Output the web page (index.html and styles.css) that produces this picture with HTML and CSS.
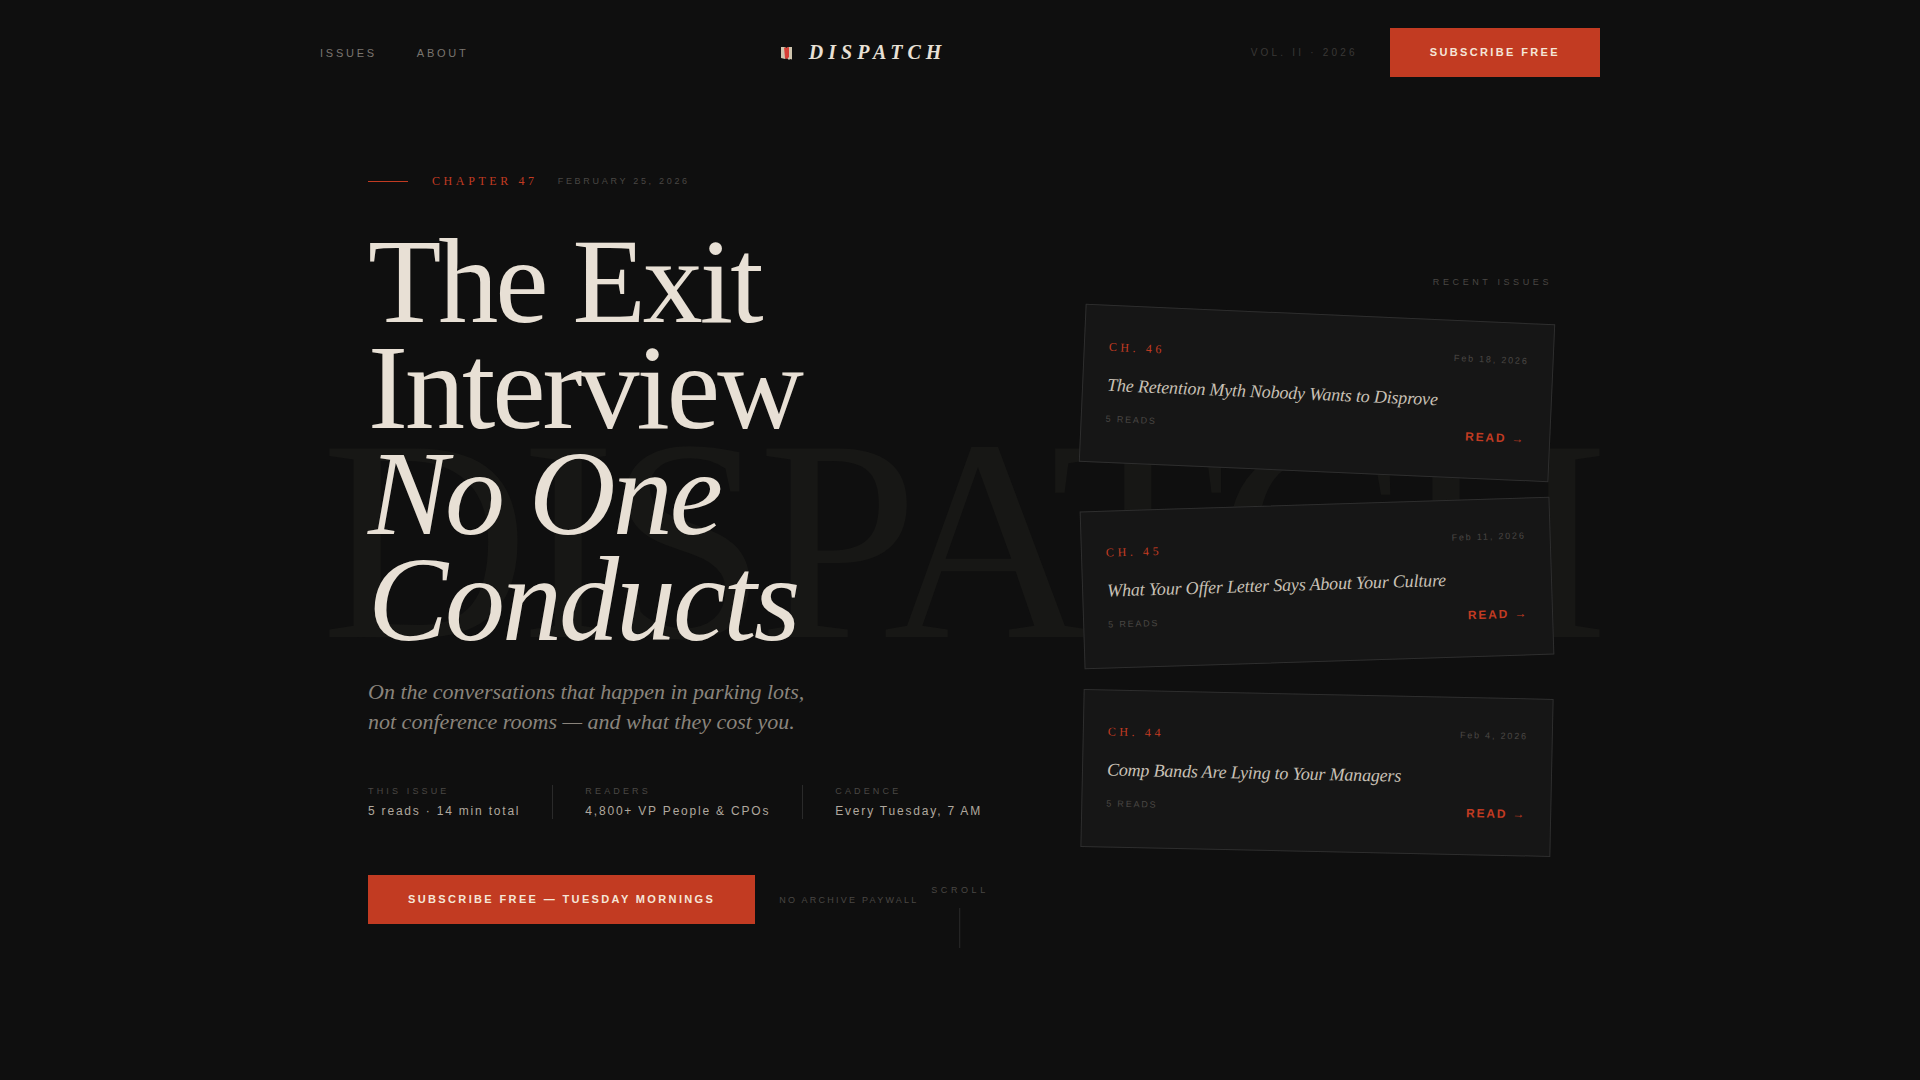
FILE: index.html
```html
<!DOCTYPE html>
<html lang="en">
<head>
  <meta charset="UTF-8">
  <meta name="viewport" content="width=device-width, initial-scale=1">
  <title>Dispatch</title>
  <link rel="stylesheet" href="styles.css">
</head>
<body>
  <div class="watermark" aria-hidden="true">DISPATCH</div>

  <header class="nav">
    <nav class="nav-links">
      <a href="#issues">ISSUES</a>
      <a href="#about">ABOUT</a>
    </nav>
    <a class="logo" href="#">
      <svg class="logo-mark" viewBox="0 0 24 24" aria-hidden="true">
        <path d="M8 6h4l1 1v10l-1 1-4-1z" fill="#cfc5ae"/>
        <path d="M19 6h-4l-1 1v10l2 2 1-1 2 .5z" fill="#cfc5ae"/>
        <path d="M11 6l1 1 4-1v10l-2 2-2-1z" fill="#d63f35"/>
      </svg>
      <span>DISPATCH</span>
    </a>
    <div class="nav-right">
      <span class="volume">VOL. II · 2026</span>
      <button class="btn">SUBSCRIBE FREE</button>
    </div>
  </header>

  <main class="hero">
    <section class="feature">
      <div class="eyebrow">
        <span class="rule"></span>
        <span class="chapter">CHAPTER 47</span>
        <span class="date">FEBRUARY 25, 2026</span>
      </div>
      <h1>The Exit<br>Interview<br><em>No One<br>Conducts</em></h1>
      <p class="deck">On the conversations that happen in parking lots,<br>not conference rooms — and what they cost you.</p>
      <dl class="stats">
        <div class="stat">
          <dt>THIS ISSUE</dt>
          <dd>5 reads · 14 min total</dd>
        </div>
        <div class="stat">
          <dt>READERS</dt>
          <dd>4,800+ VP People &amp; CPOs</dd>
        </div>
        <div class="stat">
          <dt>CADENCE</dt>
          <dd>Every Tuesday, 7 AM</dd>
        </div>
      </dl>
      <div class="actions">
        <button class="btn">SUBSCRIBE FREE — TUESDAY MORNINGS</button>
        <span class="note">NO ARCHIVE PAYWALL</span>
      </div>
    </section>

    <aside class="recent">
      <h2>RECENT ISSUES</h2>
      <div class="cards">
        <article class="card card-one">
          <div>
            <p class="card-chapter">CH. 46</p>
            <h3>The Retention Myth Nobody Wants to Disprove</h3>
            <p class="card-reads">5 READS</p>
          </div>
          <div class="card-side">
            <time class="card-date">Feb 18, 2026</time>
            <a class="read" href="#46">READ →</a>
          </div>
        </article>
        <article class="card card-two">
          <div>
            <p class="card-chapter">CH. 45</p>
            <h3>What Your Offer Letter Says About Your Culture</h3>
            <p class="card-reads">5 READS</p>
          </div>
          <div class="card-side">
            <time class="card-date">Feb 11, 2026</time>
            <a class="read" href="#45">READ →</a>
          </div>
        </article>
        <article class="card card-three">
          <div>
            <p class="card-chapter">CH. 44</p>
            <h3>Comp Bands Are Lying to Your Managers</h3>
            <p class="card-reads">5 READS</p>
          </div>
          <div class="card-side">
            <time class="card-date">Feb 4, 2026</time>
            <a class="read" href="#44">READ →</a>
          </div>
        </article>
      </div>
    </aside>

    <div class="scroll">
      <span>SCROLL</span>
      <span class="scroll-line"></span>
    </div>
  </main>
</body>
</html>
```
FILE: styles.css
```css
* {
  box-sizing: border-box;
  margin: 0;
  padding: 0;
}

body {
  position: relative;
  min-height: 100vh;
  overflow-x: hidden;
  background: #0f0f0f;
  color: #e8e0d5;
  font-family: "Liberation Sans", Arial, sans-serif;
}

a {
  color: inherit;
  text-decoration: none;
}

.watermark {
  position: absolute;
  top: 50%;
  left: 50%;
  transform: translate(-50%, -50%);
  font-family: "Liberation Serif", Georgia, serif;
  font-size: 288px;
  line-height: 288px;
  letter-spacing: -9px;
  color: #171715;
  white-space: nowrap;
  user-select: none;
}

/* Nav */

.nav {
  position: relative;
  display: flex;
  align-items: center;
  justify-content: space-between;
  max-width: 1280px;
  margin: 0 auto;
  padding: 28px 0;
}

.nav-links {
  display: flex;
  gap: 40px;
  font-size: 11px;
  letter-spacing: 0.25em;
  color: #7a756f;
}

.logo {
  display: flex;
  align-items: center;
  gap: 12px;
  font-family: "Liberation Serif", Georgia, serif;
  font-size: 20px;
  font-weight: bold;
  font-style: italic;
  letter-spacing: 0.25em;
}

.logo-mark {
  width: 24px;
  height: 24px;
}

.nav-right {
  display: flex;
  align-items: center;
  gap: 32px;
}

.volume {
  font-size: 10px;
  letter-spacing: 0.32em;
  color: #3a3836;
}

.btn {
  padding: 18px 40px;
  border: none;
  background: #c23b22;
  color: #f5e6d8;
  font-family: inherit;
  font-size: 11px;
  font-weight: bold;
  line-height: 13px;
  letter-spacing: 0.215em;
  white-space: nowrap;
  cursor: pointer;
}

/* Hero */

.hero {
  position: relative;
  display: grid;
  grid-template-columns: 1fr 470px;
  gap: 80px;
  align-items: center;
  max-width: 1280px;
  margin: 0 auto;
  padding: 68px 48px 24px;
}

.eyebrow {
  display: flex;
  align-items: center;
  margin-bottom: 40px;
}

.rule {
  width: 40px;
  height: 1px;
  margin-right: 24px;
  background: #c23b22;
}

.chapter {
  margin-right: 20px;
  font-family: "Liberation Serif", Georgia, serif;
  font-size: 12px;
  line-height: 16px;
  letter-spacing: 0.3em;
  color: #c23b22;
}

.date {
  font-size: 9px;
  letter-spacing: 0.3em;
  color: #4a4744;
}

h1 {
  margin-bottom: 24px;
  font-family: "Liberation Serif", Georgia, serif;
  font-size: 120px;
  font-weight: normal;
  line-height: 106px;
  letter-spacing: -3px;
}

.deck {
  margin-bottom: 48px;
  font-family: "Liberation Serif", Georgia, serif;
  font-size: 22px;
  font-style: italic;
  line-height: 30px;
  color: #8a847c;
}

.stats {
  display: flex;
  margin-bottom: 56px;
}

.stat + .stat {
  margin-left: 32px;
  padding-left: 32px;
  border-left: 1px solid #2a2a2a;
}

.stat dt {
  margin-bottom: 6px;
  font-size: 9px;
  line-height: 12px;
  letter-spacing: 0.35em;
  color: #4a4744;
}

.stat dd {
  font-size: 12px;
  line-height: 16px;
  letter-spacing: 0.15em;
  color: #b0a89e;
  white-space: nowrap;
}

.actions {
  display: flex;
  align-items: center;
  gap: 24px;
}

.note {
  font-size: 9px;
  letter-spacing: 0.25em;
  color: #4a4744;
}

/* Recent issues */

.recent {
  padding-top: 30px;
}

.recent h2 {
  margin-bottom: 26px;
  font-size: 9px;
  font-weight: normal;
  line-height: 12px;
  letter-spacing: 0.4em;
  text-align: right;
  color: #4a4744;
}

.cards {
  display: grid;
  gap: 32px;
}

.card {
  display: flex;
  justify-content: space-between;
  min-height: 158px;
  padding: 31px 24px;
  border: 1px solid #2e2e2e;
  background: #161616;
}

.card-one {
  transform: rotate(2.5deg);
}

.card-two {
  transform: rotate(-1.8deg);
}

.card-three {
  transform: rotate(1.2deg);
}

.card-chapter {
  margin-bottom: 16px;
  font-family: "Liberation Serif", Georgia, serif;
  font-size: 12px;
  line-height: 20px;
  letter-spacing: 0.3em;
  color: #c23b22;
}

.card h3 {
  margin-bottom: 16px;
  font-family: "Liberation Serif", Georgia, serif;
  font-size: 18px;
  font-weight: normal;
  font-style: italic;
  line-height: 24px;
  letter-spacing: -0.01em;
  color: #c8c0b5;
  white-space: nowrap;
}

.card-reads {
  font-size: 9px;
  line-height: 12px;
  letter-spacing: 0.2em;
  color: #4a4744;
}

.card-side {
  display: flex;
  flex-direction: column;
  justify-content: space-between;
  align-items: flex-end;
}

.card-date {
  font-size: 9px;
  line-height: 12px;
  letter-spacing: 0.2em;
  color: #4a4744;
  white-space: nowrap;
}

.read {
  font-size: 12px;
  font-weight: bold;
  line-height: 20px;
  letter-spacing: 0.15em;
  color: #c23b22;
  white-space: nowrap;
}

/* Scroll hint */

.scroll {
  position: absolute;
  bottom: 0;
  left: 50%;
  display: flex;
  flex-direction: column;
  align-items: center;
  gap: 12px;
  transform: translateX(-50%);
  font-size: 9px;
  line-height: 12px;
  letter-spacing: 0.4em;
  color: #4a4744;
}

.scroll-line {
  width: 1px;
  height: 40px;
  background: #2a2a2a;
}
```
